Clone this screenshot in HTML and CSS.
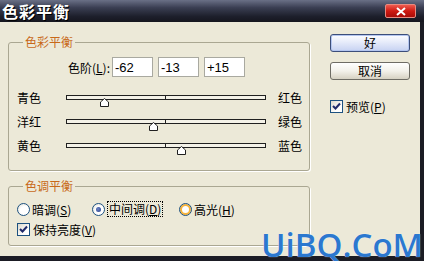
FILE: index.html
```html
<!DOCTYPE html>
<html lang="zh-CN">

<head>
    <meta charset="UTF-8">
    <meta name="viewport" content="width=device-width, initial-scale=1.0">
    <title>色彩平衡</title>
    <link rel="stylesheet" href="styles.css">
</head>

<body>
    <div class="window">
        <div class="titlebar">
            <span class="title">色彩平衡</span>
            <span class="close">
                <svg width="12" height="9" viewBox="0 0 12 9">
                    <path d="M2 1 L10 8 M10 1 L2 8" stroke="#fff" stroke-width="2" />
                </svg>
            </span>
        </div>
        <div class="client">
            <div class="main">
                <fieldset class="group color-group">
                    <legend>色彩平衡</legend>
                    <div class="levels">
                        <span class="levels-label">色阶(<u>L</u>):</span>
                        <input class="level" type="text" value="-62">
                        <input class="level" type="text" value="-13">
                        <input class="level" type="text" value="+15">
                    </div>
                    <div class="slider-row">
                        <span class="from">青色</span>
                        <div class="track">
                            <span class="tick"></span>
                            <svg class="thumb" style="left: 33px" width="9" height="9" viewBox="0 0 9 9">
                                <path d="M0.5 8.5 L0.5 4 L4.5 0.5 L8.5 4 L8.5 8.5 Z" fill="#fff" stroke="#202020" />
                            </svg>
                        </div>
                        <span class="to">红色</span>
                    </div>
                    <div class="slider-row">
                        <span class="from">洋红</span>
                        <div class="track">
                            <span class="tick"></span>
                            <svg class="thumb" style="left: 82px" width="9" height="9" viewBox="0 0 9 9">
                                <path d="M0.5 8.5 L0.5 4 L4.5 0.5 L8.5 4 L8.5 8.5 Z" fill="#fff" stroke="#202020" />
                            </svg>
                        </div>
                        <span class="to">绿色</span>
                    </div>
                    <div class="slider-row">
                        <span class="from">黄色</span>
                        <div class="track">
                            <span class="tick"></span>
                            <svg class="thumb" style="left: 110px" width="9" height="9" viewBox="0 0 9 9">
                                <path d="M0.5 8.5 L0.5 4 L4.5 0.5 L8.5 4 L8.5 8.5 Z" fill="#fff" stroke="#202020" />
                            </svg>
                        </div>
                        <span class="to">蓝色</span>
                    </div>
                </fieldset>

                <fieldset class="group tone-group">
                    <legend>色调平衡</legend>
                    <div class="radio-row">
                        <span class="radio-item item-1"><span class="radio"></span>暗调(<u>S</u>)</span>
                        <span class="radio-item item-2"><span class="radio checked"></span><span class="focus">中间调(<u>D</u>)</span></span>
                        <span class="radio-item"><span class="radio hover"></span>高光(<u>H</u>)</span>
                    </div>
                    <div class="check-row">
                        <span class="check">
                            <svg width="9" height="9" viewBox="0 0 9 9">
                                <path d="M1 4 L3.5 6.5 L8 1.5" fill="none" stroke="#1f2a6a" stroke-width="2" />
                            </svg>
                        </span>保持亮度(<u>V</u>)
                    </div>
                </fieldset>
            </div>

            <div class="side">
                <button class="btn btn-ok">好</button>
                <button class="btn btn-cancel">取消</button>
                <div class="check-row preview">
                    <span class="check">
                        <svg width="9" height="9" viewBox="0 0 9 9">
                            <path d="M1 4 L3.5 6.5 L8 1.5" fill="none" stroke="#1f2a6a" stroke-width="2" />
                        </svg>
                    </span>预览(<u>P</u>)
                </div>
            </div>
        </div>
        <div class="watermark">UiBQ.CoM</div>
    </div>
</body>

</html>
```

FILE: styles.css
```css
* {
    box-sizing: border-box;
}

body {
    margin: 0;
    font-family: "Noto Sans CJK SC", "Liberation Sans", sans-serif;
    font-size: 12px;
    color: #000;
}

.window {
    position: relative;
    width: 424px;
    height: 261px;
    overflow: hidden;
    background-color: #ece9d8;
}

.titlebar {
    height: 22px;
    display: flex;
    align-items: center;
    justify-content: space-between;
    padding: 0 8px 0 2px;
    background: linear-gradient(to bottom, #6a7086 0%, #3a3e52 35%, #1d1f2b 75%, #15161e 100%);
}

.title {
    color: #fff;
    font-size: 16px;
    font-weight: bold;
    line-height: 18px;
    letter-spacing: 1px;
    text-shadow: 1px 1px 0 #000;
}

.close {
    width: 31px;
    height: 14px;
    display: flex;
    justify-content: center;
    align-items: center;
    border: 1px solid #e88a80;
    border-radius: 2px;
    background: linear-gradient(to bottom, #ee5a4e 0%, #cf1a12 50%, #a80c08 100%);
}

.client {
    display: flex;
    height: 239px;
    padding: 12px 0 0 8px;
    border-right: 4px solid #1b1c24;
    border-bottom: 5px solid #1b1c24;
}

.main {
    width: 302px;
    padding-top: 1px;
}

.group {
    margin: 0;
    padding: 0;
    border: 1px solid #aaa792;
    border-radius: 3px;
    box-shadow: 1px 1px 0 #fff;
}

.group legend {
    margin-left: 14px;
    padding: 0 2px;
    line-height: 14px;
    color: #c8691a;
}

.color-group {
    height: 136px;
}

.tone-group {
    height: 67px;
    margin-top: 8px;
}

.levels {
    display: flex;
    align-items: center;
    margin-top: 8px;
    height: 20px;
}

.levels-label {
    width: 101px;
    text-align: right;
    margin-right: 2px;
}

.level {
    width: 41px;
    height: 20px;
    margin-right: 5px;
    padding: 0 2px;
    border: 1px solid #a9a9a0;
    background-color: #fff;
    font-family: "Liberation Sans", sans-serif;
    font-size: 13px;
    color: #000;
}

.slider-row {
    display: flex;
    align-items: center;
    height: 24px;
    padding-left: 8px;
}

.levels + .slider-row {
    margin-top: 8px;
}

.from {
    width: 49px;
}

.track {
    position: relative;
    width: 200px;
    height: 5px;
    margin-right: 12px;
    border: 1px solid #202020;
    background-color: #f4f2e8;
}

.tick {
    position: absolute;
    left: 98px;
    top: 0;
    width: 1px;
    height: 3px;
    background-color: #202020;
}

.thumb {
    position: absolute;
    top: 2px;
}

.radio-row {
    display: flex;
    align-items: center;
    height: 16px;
    margin-top: 8px;
    padding-left: 8px;
}

.radio-item {
    display: flex;
    align-items: center;
}

.item-1 {
    width: 75px;
}

.item-2 {
    width: 87px;
}

.radio {
    width: 13px;
    height: 13px;
    margin-right: 2px;
    border: 1px solid #1c5180;
    border-radius: 50%;
    background: radial-gradient(circle at 60% 60%, #fff 0%, #fff 45%, #dcd9cc 100%);
    position: relative;
}

.radio.checked::after {
    content: "";
    position: absolute;
    left: 3px;
    top: 3px;
    width: 5px;
    height: 5px;
    border-radius: 50%;
    background: radial-gradient(circle at 40% 40%, #6f84c4, #1d3a8a);
}

.radio.hover {
    box-shadow: inset 0 0 0 2px #f7b33b;
}

.focus {
    border: 1px dotted #000;
    padding: 0 1px;
    line-height: 14px;
}

.check-row {
    display: flex;
    align-items: center;
    height: 16px;
    margin-top: 4px;
    padding-left: 8px;
}

.check {
    width: 13px;
    height: 13px;
    margin-right: 3px;
    display: flex;
    justify-content: center;
    align-items: center;
    border: 1px solid #1c5180;
    background: linear-gradient(135deg, #dcd9cc 0%, #fff 70%);
}

.side {
    display: flex;
    flex-direction: column;
    margin-left: 20px;
    width: 80px;
}

.btn {
    width: 80px;
    height: 18px;
    padding: 0;
    border: 1px solid #3c4e7a;
    border-radius: 3px;
    font-family: "Noto Sans CJK SC", sans-serif;
    font-size: 12px;
    line-height: 14px;
    color: #000;
}

.btn-ok {
    background: linear-gradient(to bottom, #fdfdff 0%, #e6ebfa 45%, #c6d2f2 100%);
    box-shadow: inset 0 0 0 1px #b4c6f0;
}

.btn-cancel {
    margin-top: 10px;
    background: linear-gradient(to bottom, #ffffff 0%, #f3f1ea 50%, #d6d1c2 100%);
    border-color: #6e6c64;
}

.preview {
    margin-top: 18px;
    padding-left: 0;
}

.watermark {
    position: absolute;
    right: 1px;
    bottom: -1px;
    font-family: "Open Sans", sans-serif;
    font-size: 33px;
    font-weight: 600;
    line-height: 34px;
    color: #2b78cf;
    text-shadow: 0 0 1px #fff;
}
```
